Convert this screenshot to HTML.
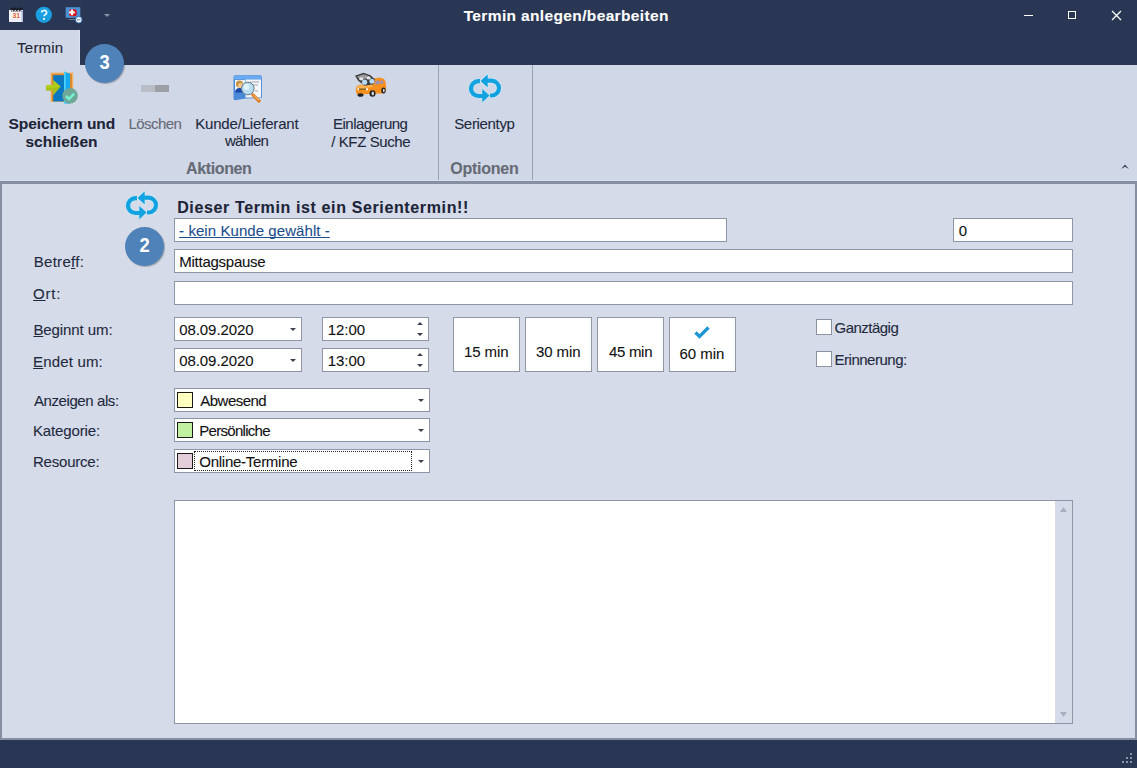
<!DOCTYPE html>
<html><head><meta charset="utf-8"><style>
html,body{margin:0;padding:0;}
body{width:1137px;height:768px;position:relative;overflow:hidden;background:#d5dbe8;font-family:"Liberation Sans",sans-serif;}
body>div,body>svg{position:absolute;box-sizing:content-box;}
.t{white-space:pre;line-height:20px;-webkit-text-stroke:0.1px currentColor;}
.t u{text-decoration-thickness:1px;text-underline-offset:0.5px;text-decoration-skip-ink:none;}
.badge{width:39px;height:39px;border-radius:50%;background:#4f82b9;color:#fff;font-weight:bold;font-size:20px;line-height:39px;text-align:center;box-shadow:1px 1px 1px rgba(60,60,60,.35);}
.badge span{display:inline-block;transform:scaleX(.92);position:relative;top:-1px;}
</style></head><body>
<div style="left:0px;top:0px;width:1137px;height:65px;background:#293754;"></div>
<div style="left:0px;top:30px;width:80px;height:35px;background:#d0d7e6;"></div>
<div style="left:79px;top:30px;width:1px;height:35px;background:#dce2ee;"></div>
<div style="left:0px;top:65px;width:1137px;height:115px;background:#d0d7e6;"></div>
<div style="left:0px;top:180px;width:1137px;height:1px;background:#d7ddeb;"></div>
<div style="left:0px;top:181px;width:1137px;height:3px;background:#868fa2;"></div>
<div style="left:0px;top:184px;width:1137px;height:554px;background:#d5dbe8;"></div>
<div style="left:0px;top:184px;width:2px;height:554px;background:#868fa2;"></div>
<div style="left:1135px;top:184px;width:2px;height:554px;background:#868fa2;"></div>
<div style="left:0px;top:738px;width:1137px;height:2px;background:#868fa2;"></div>
<div style="left:0px;top:740px;width:1137px;height:28px;background:#293754;"></div>
<div class="t" style="left:463.7px;top:6px;font-size:15.5px;font-weight:bold;color:#ffffff;letter-spacing:0.362px;">Termin anlegen/bearbeiten</div>
<div style="left:1024px;top:15px;width:9px;height:1px;background:#fff;"></div>
<div style="left:1068px;top:11px;width:6px;height:6px;border:1px solid #fff"></div>
<svg style="left:1111px;top:10px" width="11" height="11" viewBox="0 0 11 11"><path d="M1 1L10 10M10 1L1 10" stroke="#fff" stroke-width="1.25"/></svg>
<svg style="left:8px;top:7px" width="16" height="16" viewBox="0 0 16 16">
<rect x="1.2" y="3" width="13.8" height="12" fill="#c9c9e6"/>
<rect x="1" y="3" width="12.5" height="11.8" fill="#f6f4fd"/>
<rect x="13.5" y="3.5" width="1.5" height="11" fill="#b8bce0"/>
<path d="M2.8 3.2 L4.3 1.3 L5.8 3.2 L7.3 1.3 L8.8 3.2 L10.3 1.3 L11.8 3.2 L13.3 1.3 L14.2 2.5" fill="none" stroke="#1a1a22" stroke-width="1.5"/>
<path d="M3.2 4.4h10.5" stroke="#555862" stroke-width="0.9" stroke-dasharray="1.2 0.8"/>
<text x="8.3" y="10.6" font-family="Liberation Sans" font-weight="bold" font-size="6.8" fill="#e4601c" text-anchor="middle">31</text>
<rect x="2" y="12.2" width="9" height="0.9" fill="#e2e2f2"/>
</svg>
<svg style="left:35px;top:6px" width="18" height="18" viewBox="0 0 18 18">
<circle cx="8.8" cy="8.8" r="8.1" fill="#1a9ee0"/>
<path d="M3 6a7 7 0 0 1 12 0" fill="#2ab0f0" opacity=".5"/>
<path d="M6.6 6.6a2.5 2.2 0 1 1 3.6 2c-.8.4-1.1.8-1.1 1.7" fill="none" stroke="#f0fbff" stroke-width="1.6"/>
<rect x="8.1" y="12" width="1.9" height="1.8" fill="#f0fbff"/>
</svg>
<svg style="left:65px;top:6px" width="19" height="18" viewBox="0 0 19 18">
<rect x="0.7" y="1.2" width="14.6" height="10.6" fill="#4a92d4"/>
<rect x="4.2" y="3.2" width="7.4" height="7.1" rx="2" fill="#d81018"/>
<path d="M7 3.6v5.6M4.2 6.3h5.6" stroke="#fff" stroke-width="2.2"/>
<rect x="3.9" y="13.1" width="6" height="0.8" fill="#8090a8"/>
<circle cx="13.8" cy="13.8" r="3.3" fill="#f4faff" stroke="#2a64b0" stroke-width="0.9"/>
<path d="M12.2 13.8h3.2" stroke="#1a3a6a" stroke-width="1" stroke-dasharray="0.8 0.4"/>
</svg>
<svg style="left:104px;top:14px" width="6" height="3" viewBox="0 0 6 3"><path d="M0 0h6L3 3z" fill="#8a93a8"/></svg>
<div class="t" style="left:17.1px;top:38px;font-size:15px;font-weight:normal;color:#1e2636;letter-spacing:0.22px;">Termin</div>
<svg style="left:46px;top:71px" width="34" height="34" viewBox="0 0 34 34">
<rect x="4.6" y="1.6" width="22.6" height="29.4" fill="#f2b060"/>
<rect x="5.8" y="2.8" width="20.2" height="27.2" fill="#d88c30"/>
<rect x="7.2" y="4.2" width="11" height="26.3" fill="#0a78c0"/>
<path d="M18 0.7 L24 2.6 L24 32.8 L18 32.3z" fill="#16aaf0"/>
<rect x="18" y="0.7" width="1.6" height="31.6" fill="#50d2ff"/>
<path d="M0 13.9h7.2V9l7.4 6.6-7.4 8.6v-4.6H0z" fill="#b4ce1a"/>
<path d="M0 16.8h7.2v-0.1l7.4-1.1-7.4 8.6v-4.6H0z" fill="#a0b818" opacity=".6"/>
<circle cx="24.1" cy="24.8" r="7.7" fill="#6fa898"/>
<path d="M20 25l3 2.9 5.2-5.2" fill="none" stroke="#78f0d2" stroke-width="2.5"/>
</svg>
<div class="badge" style="left:85px;top:44px"><span>3</span></div>
<div style="left:141px;top:85px;width:14px;height:7px;background:#b9bdc6;"></div>
<div style="left:155px;top:85px;width:14px;height:7px;background:#9c9fa6;"></div>
<svg style="left:228px;top:70px" width="40" height="40" viewBox="0 0 40 40">
<path d="M5.5 7 Q5.5 5.2 7.5 5.2 L32 5.2 Q33.9 5.2 33.9 7.5 L33.9 28 L17.5 28.5 L7 30.2 Q5.5 30.2 5.5 28.5z" fill="#4a8ad8"/>
<rect x="6" y="5.4" width="27.5" height="4" rx="1" fill="#6aaaf0"/>
<rect x="17.5" y="9.5" width="15.5" height="18" fill="#f4f6f8"/>
<rect x="7" y="10" width="10" height="12" fill="#eaf4ff"/>
<circle cx="11.5" cy="14" r="3.5" fill="#c8903a"/>
<circle cx="12.5" cy="15.5" r="2.5" fill="#f4c890"/>
<path d="M7 22.5c0-3 2-4.5 4.5-4.5s4.5 1.5 4.5 4.5z" fill="#1a48a8"/>
<path d="M22 12h9M25 15h5M27 21h3" stroke="#9098a8" stroke-width="0.8"/>
<path d="M25 25 L31 31" stroke="#e07a20" stroke-width="3.2" stroke-linecap="round"/>
<path d="M26 25.5 L30.5 30" stroke="#f8b868" stroke-width="1.1" stroke-linecap="round"/>
<circle cx="19.8" cy="18.5" r="6.3" fill="#b8dcf0" stroke="#6a7888" stroke-width="1"/>
<circle cx="18.5" cy="17" r="3" fill="#e0f2fc"/>
</svg>
<svg style="left:350px;top:68px" width="40" height="40" viewBox="0 0 40 40">
<path d="M6 20 C7 17 10 16.5 14 16.5 L21 16.5 L24 10.5 C27 9.5 32 9.5 34 11 C36 13 36.5 18 36 22 C35.5 25 33 25.5 30 25.5 L8 26.5 C6 26.5 5.5 23 6 20z" fill="#f7901e"/>
<path d="M6.5 19.5 C8 17 11 17 14 17 L22 17 L23 19 L7 21z" fill="#ffb050"/>
<path d="M25.5 13 L29.5 12.5 L29.5 16 L25 16.5z M30.5 12.5 L33 12.8 L33.5 15.5 L30.5 16z" fill="#9a90b8"/>
<rect x="9" y="20.5" width="7" height="1.6" fill="#8a6a30"/>
<rect x="7.5" y="20.3" width="1.5" height="2" fill="#fff8e0"/><rect x="16" y="20.3" width="2" height="2" fill="#fff8e0"/>
<ellipse cx="10.5" cy="27" rx="3" ry="1.8" fill="#202020"/>
<ellipse cx="22.5" cy="25.5" rx="3" ry="3.2" fill="#202020"/><ellipse cx="22.8" cy="25.5" rx="1.2" ry="2" fill="#e0e0e0"/>
<ellipse cx="33.5" cy="22.5" rx="2.2" ry="3" fill="#202020"/><ellipse cx="33.8" cy="22.5" rx="0.9" ry="1.8" fill="#e0e0e0"/>
<path d="M5 7.8 L13.5 4.8 L20.5 7.3 L25 11.5 L23.5 16.2 L14.5 17.8 L8.2 12.8z" fill="#3c3c3c"/>
<path d="M6.8 8.6 L13.8 6.2 L20 8.4 L17.5 10.2 L10 11.5z" fill="#9c9c9c"/>
<ellipse cx="11.2" cy="10.8" rx="2.2" ry="1.6" fill="#e6e6e6"/>
<ellipse cx="18.6" cy="10" rx="2.2" ry="1.6" fill="#e6e6e6"/>
<circle cx="14.6" cy="14.2" r="2.6" fill="#b4daf8"/>
<circle cx="21.9" cy="13.2" r="2.5" fill="#b4daf8"/>
</svg>
<svg style="left:464px;top:70px" width="42" height="36" viewBox="0 0 42 36"><g fill="none" stroke="#bfe3f6" stroke-linejoin="round">
<path d="M16 11.2 L14.4 11.2 A7.4 7.4 0 0 0 14.4 26 L19 26" stroke-width="5.4"/>
<path d="M18.3 19 L25.5 25.6 L18.3 32.3z" stroke-width="1.2"/></g>
<path d="M16 11.2 L14.4 11.2 A7.4 7.4 0 0 0 14.4 26 L19 26" fill="none" stroke="#12a2e0" stroke-width="4.2"/>
<path d="M18.3 19 L25.5 25.6 L18.3 32.3z" fill="#12a2e0"/>
<g fill="none" stroke="#d8eefa" stroke-linejoin="round">
<path d="M26 25.5 L27.6 25.5 A7.4 7.4 0 0 0 27.6 10.7 L23 10.7" stroke-width="5.6"/>
<path d="M23.7 4.2 L16.5 10.9 L23.7 17.6z" stroke-width="1.4"/></g>
<path d="M26 25.5 L27.6 25.5 A7.4 7.4 0 0 0 27.6 10.7 L23 10.7" fill="none" stroke="#12a2e0" stroke-width="4.2"/>
<path d="M23.7 4.2 L16.5 10.9 L23.7 17.6z" fill="#12a2e0"/></svg>
<div class="t" style="left:8.5px;top:114px;font-size:15.5px;font-weight:bold;color:#1c2438;letter-spacing:-0.083px;">Speichern und</div>
<div class="t" style="left:25.4px;top:132px;font-size:15.5px;font-weight:bold;color:#1c2438;letter-spacing:0.087px;">schließen</div>
<div class="t" style="left:128.4px;top:114px;font-size:15px;font-weight:normal;color:#666b77;letter-spacing:-0.533px;">Löschen</div>
<div class="t" style="left:195.2px;top:114px;font-size:15px;font-weight:normal;color:#1f2a40;letter-spacing:-0.171px;">Kunde/Lieferant</div>
<div class="t" style="left:225.0px;top:131px;font-size:15px;font-weight:normal;color:#1f2a40;letter-spacing:-0.74px;">wählen</div>
<div class="t" style="left:333.1px;top:114px;font-size:15px;font-weight:normal;color:#1f2a40;letter-spacing:-0.53px;">Einlagerung</div>
<div class="t" style="left:331.2px;top:132px;font-size:15px;font-weight:normal;color:#1f2a40;letter-spacing:-0.39px;">/ KFZ Suche</div>
<div class="t" style="left:454.2px;top:114px;font-size:15px;font-weight:normal;color:#1f2a40;letter-spacing:-0.325px;">Serientyp</div>
<div class="t" style="left:186.0px;top:159px;font-size:16px;font-weight:bold;color:#666b76;letter-spacing:-0.371px;">Aktionen</div>
<div class="t" style="left:450.3px;top:159px;font-size:16px;font-weight:bold;color:#666b76;letter-spacing:-0.257px;">Optionen</div>
<div style="left:438px;top:65px;width:1px;height:115px;background:#9aa2b2;"></div>
<div style="left:532px;top:65px;width:1px;height:115px;background:#9aa2b2;"></div>
<svg style="left:1120px;top:163px" width="10" height="7" viewBox="0 0 10 7"><path d="M1 6L5 1.5L9 6L5 3.8z" fill="#3a4256"/></svg>
<svg style="left:121px;top:187px" width="42" height="36" viewBox="0 0 42 36"><g fill="none" stroke="#bfe3f6" stroke-linejoin="round">
<path d="M16 11.2 L14.4 11.2 A7.4 7.4 0 0 0 14.4 26 L19 26" stroke-width="5.4"/>
<path d="M18.3 19 L25.5 25.6 L18.3 32.3z" stroke-width="1.2"/></g>
<path d="M16 11.2 L14.4 11.2 A7.4 7.4 0 0 0 14.4 26 L19 26" fill="none" stroke="#12a2e0" stroke-width="4.2"/>
<path d="M18.3 19 L25.5 25.6 L18.3 32.3z" fill="#12a2e0"/>
<g fill="none" stroke="#d8eefa" stroke-linejoin="round">
<path d="M26 25.5 L27.6 25.5 A7.4 7.4 0 0 0 27.6 10.7 L23 10.7" stroke-width="5.6"/>
<path d="M23.7 4.2 L16.5 10.9 L23.7 17.6z" stroke-width="1.4"/></g>
<path d="M26 25.5 L27.6 25.5 A7.4 7.4 0 0 0 27.6 10.7 L23 10.7" fill="none" stroke="#12a2e0" stroke-width="4.2"/>
<path d="M23.7 4.2 L16.5 10.9 L23.7 17.6z" fill="#12a2e0"/></svg>
<div class="t" style="left:177.2px;top:198px;font-size:16px;font-weight:bold;color:#1c2438;letter-spacing:0.629px;">Dieser Termin ist ein Serientermin!!</div>
<div style="left:174px;top:218px;width:551px;height:22px;background:#fff;border:1px solid #8d95a6;"></div>
<div class="t" style="left:179.1px;top:221px;font-size:15px;font-weight:normal;color:#1d4f8c;letter-spacing:0.067px;"><u>- kein Kunde gewählt -</u></div>
<div style="left:953px;top:218px;width:118px;height:22px;background:#fff;border:1px solid #8d95a6;"></div>
<div class="t" style="left:958.7px;top:221px;font-size:15px;font-weight:normal;color:#111111;letter-spacing:0.0px;">0</div>
<div class="badge" style="left:124.8px;top:227.2px"><span>2</span></div>
<div class="t" style="left:33.7px;top:252px;font-size:15px;font-weight:normal;color:#1f2a40;letter-spacing:0.3px;">Betre<u>f</u>f:</div>
<div style="left:174px;top:249px;width:897px;height:22px;background:#fff;border:1px solid #8d95a6;"></div>
<div class="t" style="left:179.3px;top:252px;font-size:15px;font-weight:normal;color:#111111;letter-spacing:-0.255px;">Mittagspause</div>
<div class="t" style="left:33.1px;top:284px;font-size:15px;font-weight:normal;color:#1f2a40;letter-spacing:0.733px;"><u>O</u>rt:</div>
<div style="left:174px;top:281px;width:897px;height:22px;background:#fff;border:1px solid #8d95a6;"></div>
<div class="t" style="left:33.4px;top:320px;font-size:15px;font-weight:normal;color:#1f2a40;letter-spacing:-0.09px;"><u>B</u>eginnt um:</div>
<div class="t" style="left:33.1px;top:352px;font-size:15px;font-weight:normal;color:#1f2a40;letter-spacing:0.163px;"><u>E</u>ndet um:</div>
<div style="left:174px;top:317px;width:126px;height:22px;background:#fff;border:1px solid #8d95a6;"></div>
<div class="t" style="left:179.2px;top:320px;font-size:15px;font-weight:normal;color:#111111;letter-spacing:-0.067px;">08.09.2020</div>
<svg style="left:290px;top:328px" width="6" height="3" viewBox="0 0 6 3"><path d="M0 0h6L3 3z" fill="#3c4150"/></svg>
<div style="left:322px;top:317px;width:105px;height:22px;background:#fff;border:1px solid #8d95a6;"></div>
<div class="t" style="left:327.7px;top:320px;font-size:15px;font-weight:normal;color:#111111;letter-spacing:-0.025px;">12:00</div>
<svg style="left:417px;top:322px" width="6" height="14" viewBox="0 0 6 14"><path d="M0 3h6L3 0z M0 11h6L3 14z" fill="#3c4150"/></svg>
<div style="left:174px;top:348px;width:126px;height:22px;background:#fff;border:1px solid #8d95a6;"></div>
<div class="t" style="left:179.2px;top:351px;font-size:15px;font-weight:normal;color:#111111;letter-spacing:-0.067px;">08.09.2020</div>
<svg style="left:290px;top:359px" width="6" height="3" viewBox="0 0 6 3"><path d="M0 0h6L3 3z" fill="#3c4150"/></svg>
<div style="left:322px;top:348px;width:105px;height:22px;background:#fff;border:1px solid #8d95a6;"></div>
<div class="t" style="left:327.7px;top:351px;font-size:15px;font-weight:normal;color:#111111;letter-spacing:-0.025px;">13:00</div>
<svg style="left:417px;top:353px" width="6" height="14" viewBox="0 0 6 14"><path d="M0 3h6L3 0z M0 11h6L3 14z" fill="#3c4150"/></svg>
<div style="left:453px;top:317px;width:65px;height:53px;background:#fff;border:1px solid #8d95a6;"></div>
<div class="t" style="left:463.9px;top:342px;font-size:15px;font-weight:normal;color:#111111;letter-spacing:-0.08px;">15 min</div>
<div style="left:525px;top:317px;width:65px;height:53px;background:#fff;border:1px solid #8d95a6;"></div>
<div class="t" style="left:535.9px;top:342px;font-size:15px;font-weight:normal;color:#111111;letter-spacing:-0.08px;">30 min</div>
<div style="left:597px;top:317px;width:65px;height:53px;background:#fff;border:1px solid #8d95a6;"></div>
<div class="t" style="left:608.9px;top:342px;font-size:15px;font-weight:normal;color:#111111;letter-spacing:-0.28px;">45 min</div>
<div style="left:669px;top:317px;width:65px;height:53px;background:#fff;border:1px solid #8d95a6;"></div>
<div class="t" style="left:679.4px;top:344px;font-size:15px;font-weight:normal;color:#111111;letter-spacing:-0.02px;">60 min</div>
<svg style="left:693px;top:325px" width="18" height="16" viewBox="0 0 18 16"><path d="M2.5 7.5 L6.5 11.5 L15.5 2.5" fill="none" stroke="#1a96d4" stroke-width="3.2"/></svg>
<div style="left:816px;top:319px;width:14px;height:14px;background:#fff;border:1px solid #8a92a4;"></div>
<div class="t" style="left:834.5px;top:318px;font-size:15px;font-weight:normal;color:#1f2a40;letter-spacing:-0.513px;">Ganztägig</div>
<div style="left:816px;top:351px;width:14px;height:14px;background:#fff;border:1px solid #8a92a4;"></div>
<div class="t" style="left:834.5px;top:350px;font-size:15px;font-weight:normal;color:#1f2a40;letter-spacing:-0.48px;">Erinnerung:</div>
<div class="t" style="left:34.0px;top:391px;font-size:15px;font-weight:normal;color:#1f2a40;letter-spacing:-0.417px;">Anzeigen als:</div>
<div style="left:174px;top:388px;width:254px;height:22px;background:#fff;border:1px solid #8d95a6;"></div>
<div style="left:177px;top:392px;width:14px;height:14px;background:#ffffc0;border:1px solid #1a1a1a;"></div>
<div class="t" style="left:200.3px;top:391px;font-size:15px;font-weight:normal;color:#111111;letter-spacing:-0.529px;">Abwesend</div>
<svg style="left:418px;top:399px" width="6" height="3" viewBox="0 0 6 3"><path d="M0 0h6L3 3z" fill="#3c4150"/></svg>
<div class="t" style="left:33.0px;top:421px;font-size:15px;font-weight:normal;color:#1f2a40;letter-spacing:-0.133px;">Kategorie:</div>
<div style="left:174px;top:418px;width:254px;height:22px;background:#fff;border:1px solid #8d95a6;"></div>
<div style="left:177px;top:422px;width:14px;height:14px;background:#c0f0a0;border:1px solid #1a1a1a;"></div>
<div class="t" style="left:199.3px;top:421px;font-size:15px;font-weight:normal;color:#111111;letter-spacing:-0.71px;">Persönliche</div>
<svg style="left:418px;top:429px" width="6" height="3" viewBox="0 0 6 3"><path d="M0 0h6L3 3z" fill="#3c4150"/></svg>
<div class="t" style="left:33.0px;top:452px;font-size:15px;font-weight:normal;color:#1f2a40;letter-spacing:-0.213px;">Resource:</div>
<div style="left:174px;top:449px;width:254px;height:22px;background:#fff;border:1px solid #8d95a6;"></div>
<div style="left:177px;top:453px;width:14px;height:14px;background:#e2cdd8;border:1px solid #1a1a1a;"></div>
<div class="t" style="left:199.3px;top:452px;font-size:15px;font-weight:normal;color:#111111;letter-spacing:-0.262px;">Online-Termine</div>
<svg style="left:418px;top:460px" width="6" height="3" viewBox="0 0 6 3"><path d="M0 0h6L3 3z" fill="#3c4150"/></svg>
<div style="left:194px;top:451px;width:216px;height:18px;border:1px dotted #222"></div>
<div style="left:174px;top:500px;width:897px;height:222px;background:#fff;border:1px solid #8d95a6;"></div>
<div style="left:1055px;top:501px;width:17px;height:222px;background:#d5dbe8;"></div>
<svg style="left:1059px;top:506px" width="9" height="7" viewBox="0 0 9 7"><path d="M1 6h7L4.5 1z" fill="#a8afc0"/></svg>
<svg style="left:1059px;top:711px" width="9" height="7" viewBox="0 0 9 7"><path d="M1 1h7L4.5 6z" fill="#a8afc0"/></svg>
<div style="left:1130px;top:753px;width:2px;height:2px;background:#8a93a8;"></div>
<div style="left:1126px;top:757px;width:2px;height:2px;background:#8a93a8;"></div>
<div style="left:1130px;top:757px;width:2px;height:2px;background:#8a93a8;"></div>
<div style="left:1122px;top:761px;width:2px;height:2px;background:#8a93a8;"></div>
<div style="left:1126px;top:761px;width:2px;height:2px;background:#8a93a8;"></div>
<div style="left:1130px;top:761px;width:2px;height:2px;background:#8a93a8;"></div>
</body></html>
